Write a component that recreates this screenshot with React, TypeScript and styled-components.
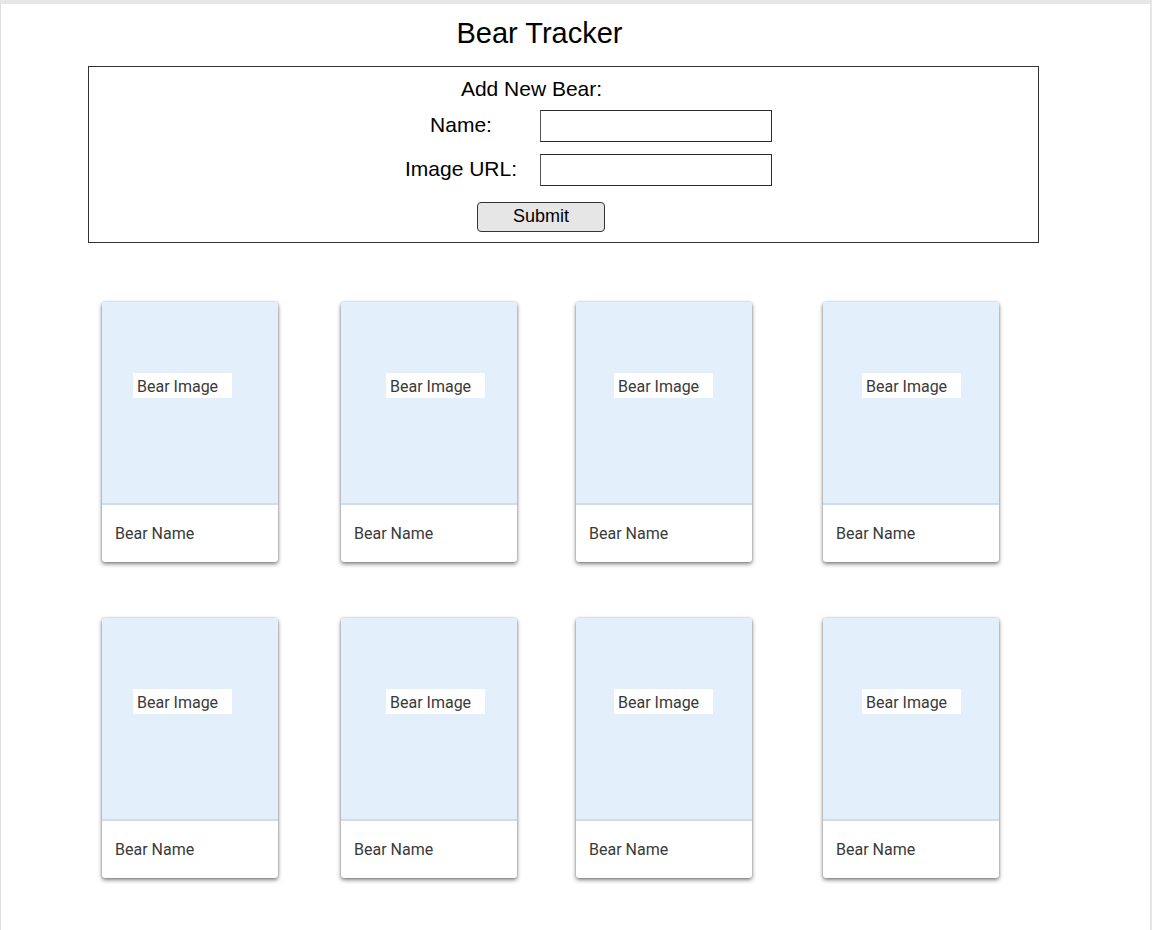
import React from "react";
import styled, { createGlobalStyle } from "styled-components";

const GlobalStyle = createGlobalStyle`
  html, body {
    margin: 0;
    padding: 0;
    background: #ffffff;
  }
  * { box-sizing: border-box; }
`;

const Frame = styled.div`
  width: 1152px;
  height: 930px;
  border-top: 4px solid #e6e6e6;
  border-left: 1px solid #dedede;
  border-right: 2px solid #e6e6e6;
  background: #fff;
  font-family: "Liberation Sans", Arial, sans-serif;
  color: #000;
  overflow: hidden;
`;

const Title = styled.h1`
  margin: 12px 0 0 87px;
  width: 951px;
  padding-right: 48px;
  text-align: center;
  font-size: 29px;
  line-height: 34px;
  font-weight: 400;
`;

const FormBox = styled.form`
  margin: 16px 0 0 87px;
  width: 951px;
  height: 177px;
  border: 1px solid #333;
  padding-top: 10px;
`;

const FormHeading = styled.div`
  padding-right: 64px;
  text-align: center;
  font-size: 21px;
  line-height: 24px;
`;

const FieldGrid = styled.div`
  margin: 9px 0 0 307px;
  display: grid;
  grid-template-columns: 130px 232px;
  column-gap: 14px;
  row-gap: 12px;
`;

const Label = styled.label`
  align-self: start;
  margin-top: 3px;
  text-align: center;
  font-size: 21px;
  line-height: 24px;
`;

const TextInput = styled.input`
  width: 232px;
  height: 32px;
  margin: 0;
  border: 1px solid #2b2b2b;
  border-left-color: #555;
  background: #fff;
  padding: 0 4px;
  font-family: "Liberation Sans", Arial, sans-serif;
  font-size: 16px;
`;

const SubmitButton = styled.button`
  display: block;
  margin: 16px 0 0 388px;
  width: 128px;
  height: 30px;
  padding: 0 0 2px;
  border: 1px solid #333;
  border-radius: 4px;
  background: #e6e6e6;
  font-family: "Liberation Sans", Arial, sans-serif;
  font-size: 18px;
  line-height: 24px;
  color: #000;
`;

const CardGrid = styled.div`
  margin: 59px 0 0 101px;
  display: grid;
  grid-template-columns: 239px 235px 247px 176px;
  row-gap: 56px;
`;

const Card = styled.div`
  width: 176px;
  height: 260px;
  display: flex;
  flex-direction: column;
  background: #fff;
  border-radius: 3px;
  overflow: hidden;
  box-shadow: 0 2px 4px rgba(0, 0, 0, 0.5), 0 0 2px rgba(0, 0, 0, 0.25);
  font-family: Roboto, "Liberation Sans", sans-serif;
`;

const ImageArea = styled.div<{ $shift: number }>`
  height: 203px;
  flex: none;
  background: #e3f0fb;
  border-bottom: 2px solid #d0dce8;
  padding-top: 71px;
  padding-left: ${(p) => p.$shift}px;
`;

const ImageLabel = styled.div`
  width: 99px;
  height: 25px;
  background: #fff;
  padding-left: 4px;
  font-size: 16px;
  line-height: 27px;
  color: #3a3a3a;
  white-space: nowrap;
`;

const NameArea = styled.div`
  flex: 1;
  display: flex;
  align-items: center;
  padding-left: 13px;
  font-size: 16px;
  line-height: 20px;
  color: #3a3a3a;
`;

const shifts = [31, 45, 38, 39, 31, 45, 38, 39];

export default function App() {
  return (
    <>
      <GlobalStyle />
      <Frame>
        <Title>Bear Tracker</Title>
        <FormBox onSubmit={(e) => e.preventDefault()}>
          <FormHeading>Add New Bear:</FormHeading>
          <FieldGrid>
            <Label htmlFor="bear-name">Name:</Label>
            <TextInput id="bear-name" type="text" />
            <Label htmlFor="bear-url">Image URL:</Label>
            <TextInput id="bear-url" type="text" />
          </FieldGrid>
          <SubmitButton type="submit">Submit</SubmitButton>
        </FormBox>
        <CardGrid>
          {shifts.map((s, i) => (
            <Card key={i}>
              <ImageArea $shift={s}>
                <ImageLabel>Bear Image</ImageLabel>
              </ImageArea>
              <NameArea>Bear Name</NameArea>
            </Card>
          ))}
        </CardGrid>
      </Frame>
    </>
  );
}
